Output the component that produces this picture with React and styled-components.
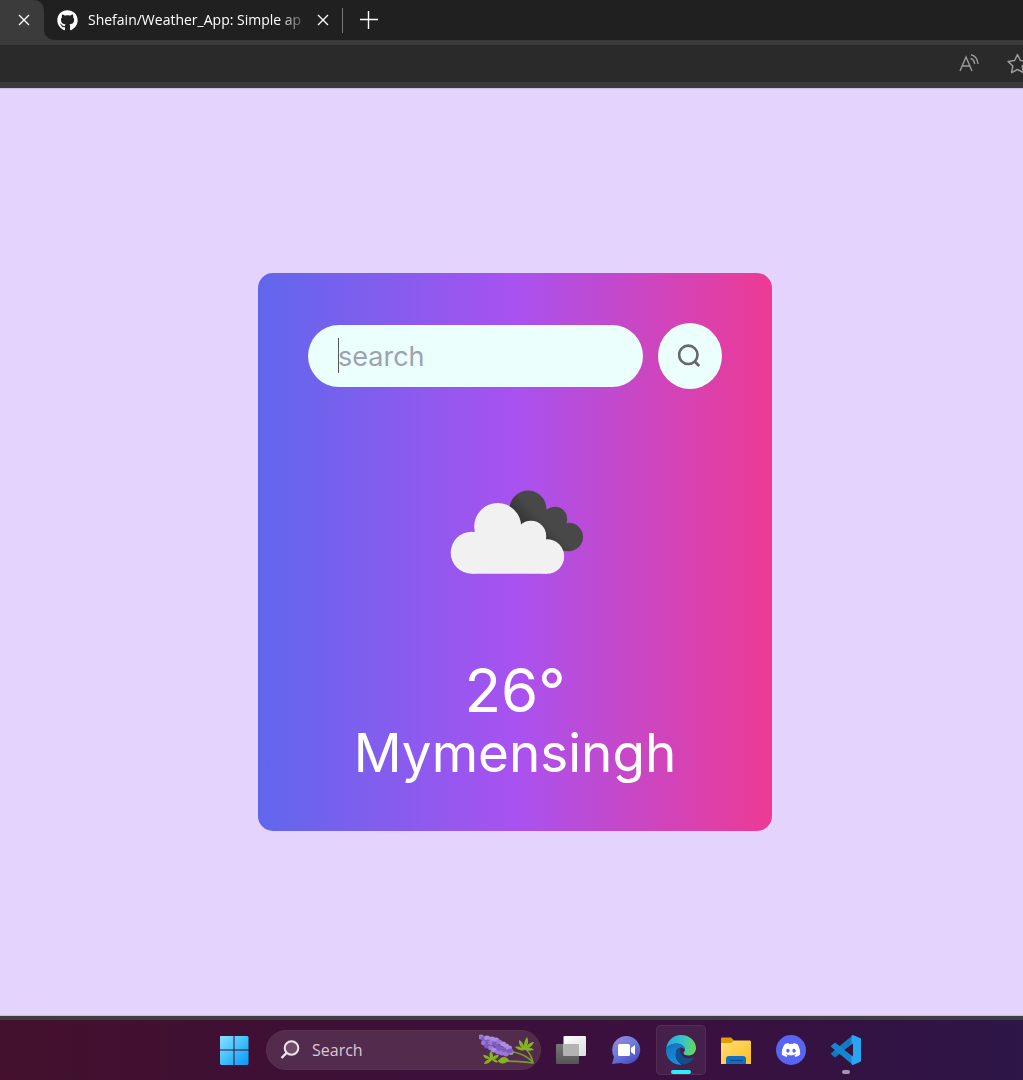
import React from "react";
import styled, { createGlobalStyle } from "styled-components";
import { FaGithub, FaDiscord } from "react-icons/fa";

const Global = createGlobalStyle`
  *, *::before, *::after { box-sizing: border-box; }
  body { margin: 0; }
  button, input { font: inherit; }
`;

const systemFont = '"Open Sans", "Noto Sans", sans-serif';
const pageFont = 'Inter, "Open Sans", sans-serif';

const Desktop = styled.div`
  min-height: 100vh;
  display: flex;
  flex-direction: column;
  overflow: hidden;
  background: #e4d4fd;
`;

const PlainButton = styled.button`
  display: grid;
  place-items: center;
  flex: none;
  padding: 0;
  border: 0;
  background: transparent;
  color: inherit;
`;

const TabStrip = styled.header`
  display: flex;
  height: 40px;
  background: #3b3b3b;
  color: #fff;
`;

const ActiveTab = styled.div`
  display: flex;
  align-items: center;
  justify-content: flex-end;
  width: 44px;
  padding-right: 14px;
  border-radius: 0 10px 0 0;
  background: #3b3b3b;
`;

const TabCorner = styled.div`
  display: flex;
  background: #202020;
`;

const InactiveTabs = styled.div`
  flex: 1;
  display: flex;
  align-items: center;
  padding-left: 13px;
  border-radius: 0 0 0 10px;
  background: #202020;
`;

const TabLink = styled.a`
  display: flex;
  align-items: center;
  gap: 10px;
  color: #fff;
  text-decoration: none;
`;

const TabTitle = styled.span`
  min-width: 218px;
  white-space: nowrap;
  font: 14px/20px ${systemFont};
  mask-image: linear-gradient(to right, #000 190px, transparent 222px);
`;

const TabClose = styled(PlainButton)`
  width: 12px;
  height: 20px;
`;

const AfterTitle = styled.div`
  display: flex;
  align-items: center;
  gap: 13px;
  padding-left: 11px;
`;

const TabDivider = styled.span`
  width: 1px;
  height: 25px;
  background: #777;
`;

const NewTab = styled(PlainButton)`
  width: 26px;
  height: 26px;
`;

const AddressBar = styled.div`
  display: flex;
  align-items: center;
  justify-content: flex-end;
  gap: 28px;
  height: 48px;
  margin-right: -6px;
  border-top: 5px solid #3b3b3b;
  border-bottom: 6px solid #3b3b3b;
  background: #2a2a2a;
  color: #9b9b9b;
`;

const Page = styled.main`
  flex: 1;
  display: flex;
  align-items: center;
  justify-content: center;
  padding: 40px 0 40px 7px;
  border-top: 1px solid #c9bcdf;
  border-bottom: 1px solid #c9bcdf;
  font-family: ${pageFont};
`;

const Card = styled.section`
  display: flex;
  flex-direction: column;
  width: 514px;
  max-width: 90%;
  min-height: 558px;
  padding: 50px;
  border-radius: 15px;
  background: linear-gradient(90deg, #6067ec, #a852f0 50%, #ee3a94);
  color: #fff;
  text-align: center;
`;

const SearchForm = styled.form`
  display: flex;
  align-items: center;
  gap: 15px;
`;

const Field = styled.label`
  position: relative;
  flex: 1;
  display: flex;
  min-width: 0;
`;

const SearchInput = styled.input`
  width: 100%;
  height: 62px;
  padding: 0 30px;
  border: 0;
  border-radius: 31px;
  outline: 0;
  background: #ebfffc;
  color: #555;
  font-size: 27px;
  &::placeholder { color: #9ea3af; opacity: 1; }
`;

const Caret = styled.span`
  position: absolute;
  left: 30px;
  top: 13px;
  width: 1px;
  height: 35px;
  background: #555;
`;

const SearchButton = styled(PlainButton)`
  width: 64px;
  height: 66px;
  border-radius: 50%;
  background: #ebfffc;
  color: #666;
`;

const Picture = styled.div`
  flex: 1;
  display: grid;
  place-items: center;
`;

const Temperature = styled.h1`
  margin: 0;
  font-size: 60px;
  font-weight: 400;
  line-height: 70px;
`;

const City = styled.h2`
  margin: 0;
  font-size: 53px;
  font-weight: 400;
  line-height: 56px;
`;

const Taskbar = styled.footer`
  display: flex;
  align-items: center;
  justify-content: center;
  gap: 5px;
  height: 64px;
  padding-left: 57px;
  border-top: 4px solid #3e3e3e;
  background: linear-gradient(90deg, #44102d, #3e1036 30%, #3b1040 65%, #341241 80%, #2d1648);
`;

const Tile = styled(PlainButton)`
  position: relative;
  width: 50px;
  height: 50px;
  border-radius: 5px;
  background: ${(p) => (p.$active ? "#45204a" : "transparent")};
  box-shadow: ${(p) => (p.$active ? "inset 0 0 0 1px #532d57" : "none")};
`;

const Indicator = styled.span`
  position: absolute;
  bottom: 1px;
  left: 50%;
  width: ${(p) => (p.$wide ? 20 : 8)}px;
  height: 4px;
  border-radius: 2px;
  background: ${(p) => (p.$wide ? "#2ceefd" : "#a493aa")};
  transform: translateX(-50%);
`;

const TaskSearch = styled.label`
  display: flex;
  align-items: center;
  gap: 12px;
  width: 275px;
  height: 40px;
  margin-left: 2px;
  padding: 0 5px 0 13px;
  border: 1px solid #59324f;
  border-radius: 20px;
  background: #532b4c;
`;

const TaskInput = styled.input`
  flex: 1;
  min-width: 0;
  padding: 0;
  border: 0;
  outline: 0;
  background: transparent;
  font: 16px/24px ${systemFont};
  &::placeholder { color: #d9c9d6; opacity: 1; }
`;

const DiscordDisc = styled.span`
  display: grid;
  place-items: center;
  width: 30px;
  height: 30px;
  border-radius: 50%;
  background: #5865f2;
  color: #fff;
`;

const CloseIcon = () => (
  <svg width="12" height="12" viewBox="0 0 12 12" stroke="#fff" strokeWidth="1.3">
    <path d="M1 1l10 10M11 1L1 11" />
  </svg>
);

const PlusIcon = () => (
  <svg width="18" height="18" viewBox="0 0 18 18" stroke="#fff" strokeWidth="1.4">
    <path d="M0 8.500h18M8.500 0v18" />
  </svg>
);

const ReadAloudIcon = () => (
  <svg width="20" height="20" viewBox="0 0 20 20" fill="none" stroke="currentColor" strokeWidth="1.4">
    <path d="M1 17L7 3l6 14M3.300 12h7.400M12 .7c4 .8 6.500 4 7 9.300M11.500 4.500c2.500.6 3.800 2.500 4.200 5.500" />
  </svg>
);

const StarIcon = () => (
  <svg width="22" height="22" viewBox="0 0 22 22" fill="none" stroke="currentColor" strokeWidth="1.5" strokeLinejoin="round">
    <path d="M10.500 1.500l2.900 6 6.600.9-4.800 4.600 1.200 6.600-5.900-3.100-5.900 3.100L5.800 13 1 8.400l6.600-.9z" />
  </svg>
);

const MagnifierIcon = () => (
  <svg width="24" height="24" viewBox="0 0 24 24" fill="none" stroke="currentColor" strokeWidth="2.600">
    <circle cx="10.300" cy="10.800" r="9.200" />
    <path d="M16.200 17l5 5" />
  </svg>
);

const CloudsIcon = () => (
  <svg width="170" height="170" viewBox="0 0 170 170" role="img" aria-label="Clouds">
    <defs>
      <linearGradient id="shade" x1="100" y1="100" x2="116" y2="84" gradientUnits="userSpaceOnUse">
        <stop stopColor="#2f2f30" /><stop offset="1" stopColor="#484848" />
      </linearGradient>
    </defs>
    <g fill="url(#shade)" transform="translate(0 1)">
      <circle cx="98" cy="71" r="18.500" />
      <circle cx="125" cy="81" r="12.200" />
      <circle cx="138.800" cy="99" r="14.200" />
      <path d="M85 84l27-16 6 4 18 12 2 29-20-2z" />
    </g>
    <g fill="#f1f1f1" transform="translate(0 1)">
      <circle cx="67.700" cy="88.500" r="23.500" />
      <circle cx="41.700" cy="114.700" r="21" />
      <circle cx="101" cy="98" r="15.200" />
      <circle cx="117" cy="118.500" r="17.200" />
      <path d="M41.700 135.700L45 92l45-2 26 10 1 35.700z" />
    </g>
  </svg>
);

const WindowsIcon = () => (
  <svg width="30" height="30" viewBox="0 0 30 30">
    <defs>
      <linearGradient id="win" x1="0" y1="0" x2="30" y2="30" gradientUnits="userSpaceOnUse">
        <stop stopColor="#8be2ff" />
        <stop offset=".5" stopColor="#43c2fb" />
        <stop offset="1" stopColor="#0a95f8" />
      </linearGradient>
    </defs>
    <path fill="url(#win)" d="M1.500 1H14.500v13.500H1v-13zM15.500 1h13l1 1v12.500h-14zM1 15.500h13.500V30H2l-1-1zM15.500 15.500h14V29l-1 1h-13z" />
  </svg>
);

const TaskSearchIcon = () => (
  <svg width="20" height="20" viewBox="0 0 20 20" fill="none" stroke="#efe8ef" strokeWidth="2">
    <circle cx="11.500" cy="8" r="6.800" fill="#6f4d69" />
    <path d="M6.500 13L1.500 18" strokeWidth="2.400" />
  </svg>
);

const buds = [
  [2, 3], [5, 5], [8, 4], [5, 9], [9, 8], [13, 5], [12, 9], [8, 12], [17, 6], [12, 14],
  [16, 10], [15, 16], [20, 8], [19, 13], [24, 10], [19, 18], [22, 15], [27, 12], [23, 19],
  [26, 16], [30, 14], [27, 20], [31, 17],
];

const LavenderIcon = () => (
  <svg width="56" height="32" viewBox="0 0 56 32">
    <g fill="none" stroke="#7a9b2d" strokeWidth="1.700" strokeLinecap="round">
      <path d="M32 17.500c9 1.500 17 5 22 11M46 14c4 4 7 9 8 15M54 29C43 27 33 27 20 27" />
    </g>
    <g fill="#86b320">
      <path d="M46 16c-4 1-7 0-10-3 3-1 5 0 7 1-3-3-3-5-3-8 3 1 4 4 5 6 0-4 1-6 3-9 2 4 1 7 0 9 2-3 4-4 7-4-1 3-3 4-5 6 2 0 3 0 5 2-4 1-6 1-9 0z" />
      <path d="M13 26c-3 3-5 4-8 4 1-3 3-4 5-5-3 0-5-1-6-4 4 0 5 1 7 3-1-3-1-5 1-7 2 2 2 4 2 6 2-2 3-2 6-2-1 3-3 4-5 4 2 1 3 1 4 3-2 1-4 0-6-2z" />
      <path d="M19 27c3-5 8-5 11-1-3 4-8 5-11 1z" />
    </g>
    <ellipse cx="32" cy="18" rx="2.500" ry="3" fill="#a7a29c" />
    {buds.map(([x, y], i) => (
      <ellipse key={i} cx={x} cy={y} rx="2.900" ry="2.400" fill={["#9a78d6", "#7f5cc0", "#ab8ee2"][i % 3]} />
    ))}
  </svg>
);

const TaskViewIcon = () => (
  <svg width="30" height="28" viewBox="0 0 30 28">
    <defs>
      <linearGradient id="front" x1="0" y1="0" x2="1" y2="1"><stop stopColor="#fff" /><stop offset="1" stopColor="#dcdcdc" /></linearGradient>
      <linearGradient id="back" x1="0" y1="0" x2="0" y2="1"><stop stopColor="#777" /><stop offset="1" stopColor="#555" /></linearGradient>
    </defs>
    <rect y="8" width="23" height="20" rx="1" fill="url(#back)" />
    <rect x="7.500" width="22.500" height="20" rx="1" fill="url(#front)" />
    <path d="M7.500 8H23v12H7.500z" fill="#b3b3b3" />
  </svg>
);

const ChatIcon = () => (
  <svg width="30" height="30" viewBox="0 0 30 30">
    <defs>
      <linearGradient id="chat" x1="5" y1="2" x2="22" y2="28" gradientUnits="userSpaceOnUse">
        <stop stopColor="#9b84dc" /><stop offset=".45" stopColor="#6b7fdd" /><stop offset="1" stopColor="#4f4cc0" />
      </linearGradient>
    </defs>
    <path fill="url(#chat)" d="M15 1a14 14 0 1 1-5 27L1 29l2-7A14 14 0 0 1 15 1z" />
    <rect x="7" y="9" width="12" height="12" rx="1.500" fill="#fff" />
    <path fill="#fff" d="M20 13l4-3v10l-4-3z" />
  </svg>
);

const EdgeIcon = () => (
  <svg width="30" height="30" viewBox="0 0 30 30">
    <defs>
      <linearGradient id="edgeTop" x1="2" y1="8" x2="29" y2="14" gradientUnits="userSpaceOnUse">
        <stop stopColor="#2aa9e0" /><stop offset=".5" stopColor="#35c6c8" /><stop offset="1" stopColor="#65d95a" />
      </linearGradient>
      <linearGradient id="edgeSide" x1="5" y1="9" x2="12" y2="30" gradientUnits="userSpaceOnUse">
        <stop stopColor="#1674bd" /><stop offset="1" stopColor="#1391e2" />
      </linearGradient>
    </defs>
    <path fill="url(#edgeTop)" d="M.2 13.500C1 6 7 0 15 0c9 0 15 6.500 15 13 0 4.500-3.200 7.500-7.400 7.500-3.400 0-5.100-1.200-5.100-2.400 0-.8 1.400-1.300 1.400-3.600 0-3.200-3.400-5.700-8-5.700-5 0-9.200 2-10.700 4.700z" />
    <path fill="url(#edgeSide)" d="M.1 14.500C.8 11 5 8.600 10.200 8.600c4.700 0 8.700 2.400 8.700 6-1-1.300-2.300-2-4-2-3 0-5.200 3.500-5.200 7.400 0 4.600 3.300 8.300 6.500 9.800C7 30.500-.7 24 .1 14.500z" />
    <path fill="#134f8e" d="M14.500 12.700c-2.700.7-4.800 3.700-4.800 7.300 0 5 4 9 8.800 9.600 4-.8 7.300-3.300 9.200-6.500.3-.6-.2-1-.8-.7-6.400 3-11.800-.5-12.400-5.300-.2-1.800 0-3.200 0-4.400z" />
  </svg>
);

const FolderIcon = () => (
  <svg width="30" height="28" viewBox="0 0 30 28">
    <defs>
      <linearGradient id="folder" x1="0" y1="4" x2="20" y2="28" gradientUnits="userSpaceOnUse"><stop stopColor="#ffdf75" /><stop offset="1" stopColor="#fdc42f" /></linearGradient>
    </defs>
    <path fill="#e19d05" d="M0 2.500Q0 1.500 1 1.500h9l3 3V9H0z" />
    <path fill="url(#folder)" d="M0 7h10l3-2.500h16l1 1V28H0z" />
    <path fill="#1170c3" d="M5 28v-5q0-3 3-3h14q3 0 3 3v5z" />
    <path stroke="#0b4d90" strokeWidth="1.300" d="M9 24.500h13" />
  </svg>
);

const CodeIcon = () => (
  <svg width="31" height="30" viewBox="0 0 31 30">
    <path fill="#1479bf" d="M22 0l1 8L4 22.500l-3.500-3q-.8-.9 0-1.800z" />
    <path fill="#1687cf" d="M4 7.500L23 22l-1 8L.5 12.300q-.8-.9 0-1.800z" />
    <path fill="#2aa5f1" d="M22 0l8 3.500v23L22 30l-1.500-.8V.8z" />
    <path fill="#351241" d="M22 8.500v13L13.500 15z" />
  </svg>
);

export default function App() {
  return (
    <Desktop>
      <Global />
      <TabStrip>
        <TabCorner>
          <ActiveTab>
            <TabClose aria-label="Close current tab"><CloseIcon /></TabClose>
          </ActiveTab>
        </TabCorner>
        <InactiveTabs>
          <TabLink href="#repo">
            <FaGithub size={21} />
            <TabTitle>Shefain/Weather_App: Simple ap</TabTitle>
          </TabLink>
          <AfterTitle>
            <TabClose aria-label="Close tab"><CloseIcon /></TabClose>
            <TabDivider />
            <NewTab aria-label="New tab"><PlusIcon /></NewTab>
          </AfterTitle>
        </InactiveTabs>
      </TabStrip>
      <AddressBar>
        <PlainButton aria-label="Read aloud"><ReadAloudIcon /></PlainButton>
        <PlainButton aria-label="Add to favourites"><StarIcon /></PlainButton>
      </AddressBar>

      <Page>
        <Card>
          <SearchForm onSubmit={(e) => e.preventDefault()}>
            <Field>
              <SearchInput type="text" placeholder="search" aria-label="City" />
              <Caret />
            </Field>
            <SearchButton type="submit" aria-label="Search"><MagnifierIcon /></SearchButton>
          </SearchForm>
          <Picture><CloudsIcon /></Picture>
          <Temperature>26°</Temperature>
          <City>Mymensingh</City>
        </Card>
      </Page>

      <Taskbar>
        <Tile aria-label="Start"><WindowsIcon /></Tile>
        <TaskSearch>
          <TaskSearchIcon />
          <TaskInput type="text" placeholder="Search" aria-label="Search the desktop" />
          <LavenderIcon />
        </TaskSearch>
        <Tile aria-label="Task view"><TaskViewIcon /></Tile>
        <Tile aria-label="Chat"><ChatIcon /></Tile>
        <Tile $active aria-label="Edge"><EdgeIcon /><Indicator $wide /></Tile>
        <Tile aria-label="File Explorer"><FolderIcon /></Tile>
        <Tile aria-label="Discord"><DiscordDisc><FaDiscord size={20} /></DiscordDisc></Tile>
        <Tile aria-label="Visual Studio Code"><CodeIcon /><Indicator /></Tile>
      </Taskbar>
    </Desktop>
  );
}
